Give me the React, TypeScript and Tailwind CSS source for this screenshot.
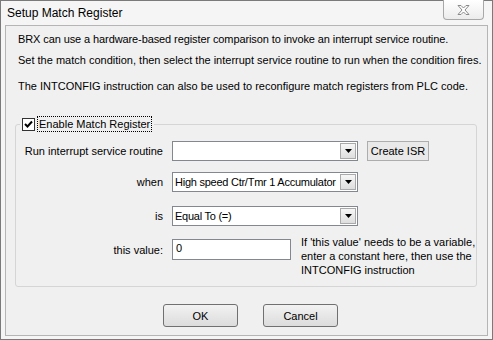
import React from "react";

const font = { fontFamily: '"Liberation Sans", Arial, sans-serif' };

function DropArrow() {
  return (
    <div className="w-[16px] h-[16px] mr-[1px] flex items-center justify-center border border-[#a9a9a9] bg-gradient-to-b from-[#f6f6f6] to-[#dedede]">
      <svg width="7" height="4" viewBox="0 0 7 4">
        <path d="M0 0H7L3.5 4Z" fill="#000" />
      </svg>
    </div>
  );
}

function Combo({ value = "" }: { value?: string }) {
  return (
    <div className="w-[186px] h-[20px] flex items-center bg-white border border-[#828790]">
      <div className="flex-1 pl-[2px] text-[11px] leading-[14px] whitespace-nowrap overflow-hidden tracking-[-0.25px]">
        {value}
      </div>
      <DropArrow />
    </div>
  );
}

function Btn({ label }: { label: string }) {
  return (
    <div className="w-[75px] h-[23px] flex items-center justify-center rounded-[3px] border border-[#707070] bg-gradient-to-b from-[#f2f2f2] to-[#dcdcdc] text-[11px]">
      {label}
    </div>
  );
}

export default function App() {
  return (
    <div
      style={font}
      className="w-[493px] h-[340px] flex flex-col border border-[#7a7a7a] bg-[#f5f5f5] text-black"
    >
      <div className="relative h-[24px] flex items-center pl-[6px] text-[12px]">
        <span>Setup Match Register</span>
        <div className="absolute top-[-1px] right-[8px] w-[41px] h-[20px] flex items-center justify-center rounded-b-[4px] border border-t-0 border-[#a8a8a8] bg-gradient-to-b from-[#ffffff] to-[#ececec]">
          <svg width="13" height="10" viewBox="0 0 13 10">
            <path
              d="M1 0.5H4L6.5 3L9 0.5H12L8 5L12 9.5H9L6.5 7L4 9.5H1L5 5Z"
              fill="#fdfdfd"
              stroke="#8a8a8a"
              strokeWidth="1"
              strokeLinejoin="round"
            />
          </svg>
        </div>
      </div>

      <div className="flex-1 mx-[4px] mb-[3px] border border-[#b5b5b5] bg-[#f0f0f0] flex flex-col text-[11px] leading-[14px]">
        <p className="mt-[6px] pl-[12px] tracking-[-0.1px]">
          BRX can use a hardware-based register comparison to invoke an interrupt service routine.
        </p>
        <p className="mt-[7px] pl-[12px]">
          Set the match condition, then select the interrupt service routine to run when the condition fires.
        </p>
        <p className="mt-[12px] pl-[12px]">
          The INTCONFIG instruction can also be used to reconfigure match registers from PLC code.
        </p>

        <div className="relative mt-[31px] ml-[9px] mr-[10px] h-[163px] border border-[#d5d5d5] rounded-[3px] pt-[16px] flex flex-col">
          <div className="absolute top-[-9px] left-[4px] flex items-center bg-[#f0f0f0] pl-[2px] pr-[2px]">
            <div className="w-[13px] h-[13px] border border-[#333] bg-white flex items-center justify-center">
              <svg width="9" height="9" viewBox="0 0 9 9">
                <path d="M1 4L3.5 6.5L8 1.5" fill="none" stroke="#000" strokeWidth="2" />
              </svg>
            </div>
            <span className="ml-[2px] px-[1px] h-[16px] leading-[14px] border border-dotted border-[#000]">
              Enable Match Register
            </span>
          </div>

          <div className="flex items-center h-[20px]">
            <div className="w-[147px] text-right">Run interrupt service routine</div>
            <div className="ml-[9px]">
              <Combo />
            </div>
            <div className="ml-[9px] w-[62px] h-[20px] flex items-center justify-center border border-[#adadad] bg-[#e9e9e9]">
              Create ISR
            </div>
          </div>

          <div className="flex items-center h-[20px] mt-[11px]">
            <div className="w-[147px] text-right">when</div>
            <div className="ml-[9px]">
              <Combo value="High speed Ctr/Tmr 1 Accumulator" />
            </div>
          </div>

          <div className="flex items-center h-[20px] mt-[14px]">
            <div className="w-[147px] text-right">is</div>
            <div className="ml-[9px]">
              <Combo value="Equal To (=)" />
            </div>
          </div>

          <div className="flex items-start mt-[9px]">
            <div className="w-[147px] text-right mt-[8px]">this value:</div>
            <div className="ml-[9px] mt-[4px] w-[119px] h-[21px] bg-white border border-[#828790] pl-[3px] pt-[1px]">
              0
            </div>
            <div className="ml-[10px]">
              If 'this value' needs to be a variable,
              <br />
              enter a constant here, then use the
              <br />
              INTCONFIG instruction
            </div>
          </div>
        </div>

        <div className="flex mt-[17px] pl-[157px] gap-[25px]">
          <Btn label="OK" />
          <Btn label="Cancel" />
        </div>
      </div>
    </div>
  );
}
